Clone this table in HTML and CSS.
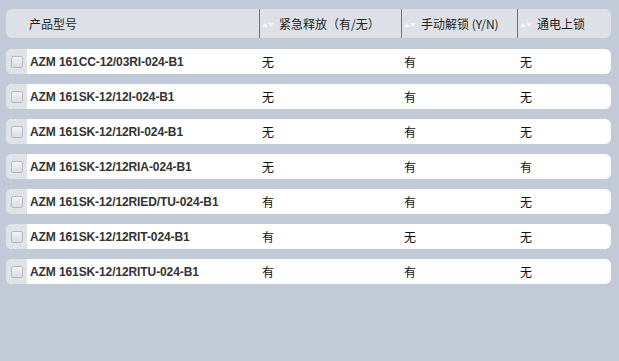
FILE: index.html
```html
<!DOCTYPE html>
<html lang="zh">
<head>
<meta charset="utf-8">
<link rel="stylesheet" href="styles.css">
</head>
<body>
<div class="table">
  <div class="head">
    <div class="hcell hfirst">产品型号</div>
    <div class="hcell"><span class="sort"><i class="up"></i><i class="down"></i></span>紧急释放（有/无）</div>
    <div class="hcell"><span class="sort"><i class="up"></i><i class="down"></i></span>手动解锁 (Y/N)</div>
    <div class="hcell"><span class="sort"><i class="up"></i><i class="down"></i></span>通电上锁</div>
  </div>
  <div class="row"><div class="chk"><span class="box"></span></div><div class="name">AZM 161CC-12/03RI-024-B1</div><div class="val">无</div><div class="val">有</div><div class="val">无</div></div>
  <div class="row"><div class="chk"><span class="box"></span></div><div class="name">AZM 161SK-12/12I-024-B1</div><div class="val">无</div><div class="val">有</div><div class="val">无</div></div>
  <div class="row"><div class="chk"><span class="box"></span></div><div class="name">AZM 161SK-12/12RI-024-B1</div><div class="val">无</div><div class="val">有</div><div class="val">无</div></div>
  <div class="row"><div class="chk"><span class="box"></span></div><div class="name">AZM 161SK-12/12RIA-024-B1</div><div class="val">无</div><div class="val">有</div><div class="val">有</div></div>
  <div class="row"><div class="chk"><span class="box"></span></div><div class="name">AZM 161SK-12/12RIED/TU-024-B1</div><div class="val">有</div><div class="val">有</div><div class="val">无</div></div>
  <div class="row"><div class="chk"><span class="box"></span></div><div class="name">AZM 161SK-12/12RIT-024-B1</div><div class="val">有</div><div class="val">无</div><div class="val">无</div></div>
  <div class="row"><div class="chk"><span class="box"></span></div><div class="name">AZM 161SK-12/12RITU-024-B1</div><div class="val">有</div><div class="val">有</div><div class="val">无</div></div>
</div>
</body>
</html>
```
FILE: styles.css
```css
html, body {
  margin: 0;
  padding: 0;
  background: #c1cad6;
  height: 100%;
}
body {
  font-family: "Liberation Sans", "Noto Sans CJK SC", sans-serif;
  font-size: 12px;
  color: #111;
}
.table {
  padding: 9px 8px 0 6px;
  display: flex;
  flex-direction: column;
  gap: 10px;
}
.head, .row {
  display: grid;
  grid-template-columns: 21px 232px 142px 116px 94px;
}
.head {
  height: 29px;
  background: #dde1e7;
  border-radius: 6px;
  margin-bottom: 1px;
  grid-template-columns: 253px 142px 116px 94px;
  font-family: "Noto Sans CJK SC", sans-serif;
  font-size: 12px;
  color: #222;
}
.hcell {
  display: flex;
  align-items: center;
  padding-left: 2px;
  border-left: 1px solid #6f747c;
}
.hcell.hfirst {
  border-left: none;
  padding-left: 23px;
}
.sort {
  display: inline-flex;
  align-items: center;
  margin-right: 5px;
  margin-top: 3px;
}
.sort i {
  display: block;
  width: 0;
  height: 0;
  border-left: 3.5px solid transparent;
  border-right: 3.5px solid transparent;
}
.sort .up {
  border-bottom: 4px solid #f4f6f9;
}
.sort .down {
  border-top: 4px solid #f4f6f9;
}
.row {
  height: 25px;
  background: #fff;
  border-radius: 6px;
  overflow: hidden;
}
.chk {
  background: #dfe3e8;
  display: flex;
  align-items: center;
  justify-content: center;
}
.box {
  width: 10px;
  height: 10px;
  border: 1px solid #b6bac0;
  border-radius: 2px;
  background: linear-gradient(#f2f3f5, #d9dce0);
}
.name {
  display: flex;
  align-items: center;
  padding-left: 3px;
  font-weight: bold;
  color: #333;
  letter-spacing: -0.1px;
}
.val {
  display: flex;
  align-items: center;
  padding-left: 3px;
  font-family: "Noto Sans CJK SC", sans-serif;
  color: #111;
}
```
